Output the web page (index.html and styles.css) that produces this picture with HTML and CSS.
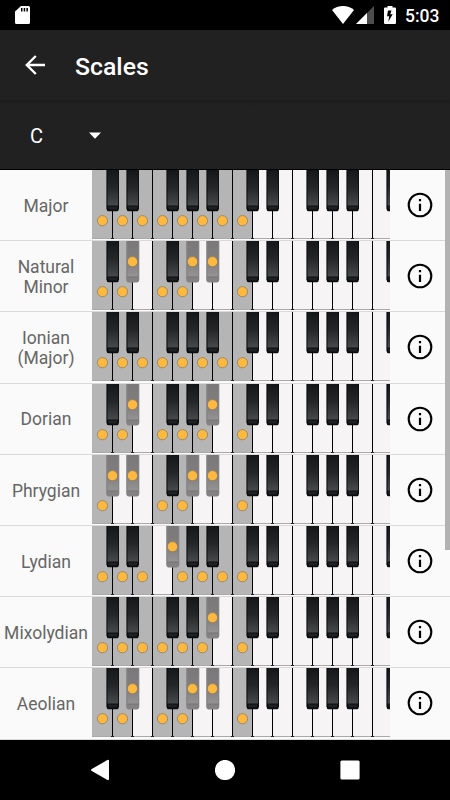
FILE: index.html
```html
<!DOCTYPE html>
<html lang="en">
<head>
<meta charset="utf-8">
<title>Scales</title>
<link rel="stylesheet" href="styles.css">
</head>
<body>
<div class="screen">
  <div class="status">
    <svg class="sd" width="16" height="18" viewBox="0 0 16 18"><path fill="#fff" fill-rule="evenodd" d="M6 0H13.500Q15 0 15 1.500V16.500Q15 18 13.500 18H1.500Q0 18 0 16.500V5.500ZM6 2V5.500H7.500V2ZM8.700 2V5.500H10.200V2ZM11.400 2V5.500H12.900V2Z"/></svg>
    <svg class="wifi" width="22" height="18" viewBox="0 0 22 18"><path fill="#fff" d="M0 4Q4.500 0 11 0T22 4L11 18Z"/></svg>
    <svg class="signal" width="18" height="18" viewBox="0 0 18 18"><path fill="#4d4d4d" d="M18 0V18H0Z"/><path fill="#fff" d="M11 7V18H0Z"/></svg>
    <svg class="battery" width="12" height="18" viewBox="0 0 12 18"><path fill="#fff" fill-rule="evenodd" d="M3.500 0H8.500V1.500H11Q12 1.500 12 2.500V17Q12 18 11 18H1Q0 18 0 17V2.500Q0 1.500 1 1.500H3.500ZM7.500 4.500H4L3 10.200H5.200L4.300 15.800 8.700 8.200H6.300Z"/></svg>
    <span class="time">5:03</span>
  </div>
  <header class="appbar">
    <svg width="20" height="20" viewBox="0 0 20 20"><path fill="none" stroke="#fff" stroke-width="2.400" d="M20 10H2M10.800 1L1.800 10 10.800 19"/></svg>
    <h1>Scales</h1>
  </header>
  <div class="picker"><span>C</span><svg width="12" height="7" viewBox="0 0 12 7"><path fill="#fff" d="M0 .5H12L6 6.700Z"/></svg></div>
  <main class="list" id="list"></main>
  <nav class="nav">
    <svg width="20" height="22" viewBox="0 0 20 22"><path fill="#fff" d="M17 1.200Q19 .2 19 2V20Q19 21.800 17 20.800L1.800 12Q.2 11 1.800 10Z"/></svg>
    <svg width="20" height="20" viewBox="0 0 20 20"><circle cx="10" cy="10" r="10.100" fill="#fff"/></svg>
    <svg width="20" height="20" viewBox="0 0 20 20"><rect x=".4" y=".4" width="19.200" height="19.200" rx="1.500" fill="#fff"/></svg>
  </nav>
  <div class="scrollbar"></div>
</div>
<svg class="defs" width="0" height="0">
  <defs>
    <linearGradient id="ebony" x1="0" y1="0" x2="0" y2="1"><stop offset="0" stop-color="#151617"/><stop offset=".5" stop-color="#242628"/><stop offset="1" stop-color="#48494b"/></linearGradient>
    <linearGradient id="muted" x1="0" y1="0" x2="0" y2="1"><stop offset="0" stop-color="#7a7878"/><stop offset=".6" stop-color="#807e7e"/><stop offset="1" stop-color="#959393"/></linearGradient>
    <g id="black"><path fill="#0b0c0d" d="M-.4 0H12.200V38.500Q12 41.200 10 41.200H2Q-.2 41.200-.4 38.500Z"/><rect x=".7" width="10.600" height="35.500" fill="url(#ebony)"/><path fill="#1f2122" d="M1 36.500H11L10 39.500H2Z"/></g>
    <g id="black-on"><path fill="#848282" d="M-.6 0H12.500V38.500Q12.300 41.500 10 41.500H2Q-.3 41.500-.6 38.500Z"/><rect x=".7" width="10.600" height="35.500" fill="url(#muted)"/><path fill="#7c7a7a" d="M.5 35.500H11.500V37H.5Z"/></g>
  </defs>
</svg>
<script src="script.js"></script>
</body>
</html>
```

FILE: styles.css
```css
* { box-sizing: border-box; }
body { margin: 0; background: #000; font-family: Roboto, sans-serif; }
.screen { position: relative; width: 450px; height: 800px; display: flex; flex-direction: column; overflow: hidden; }
.status { height: 30px; flex: none; display: flex; align-items: center; padding: 0 10px 0 15px; color: #fff; }
.status svg { flex: none; }
.wifi { margin-left: auto; margin-right: -1px; }
.signal { margin-left: 3px; }
.battery { margin-left: 10px; }
.time { width: 35px; margin-left: 9px; font-size: 17.5px; font-weight: 500; line-height: 30px; white-space: nowrap; padding-top: 1px; }
.appbar { height: 70px; flex: none; display: flex; align-items: center; gap: 30px; padding-left: 25px; background: #212121; color: #fff; }
.appbar h1 { margin: 3px 0 0; font-size: 24.8px; line-height: 30px; font-weight: 500; }
.picker { height: 69px; flex: none; display: flex; align-items: center; padding-left: 30px; background: linear-gradient(#1c1c1c, #212121 6px); color: #fff; font-size: 20px; }
.picker span { width: 59px; padding-top: 2px; }
.picker svg { margin-top: 2px; }
.list { height: 571px; flex: none; display: grid; grid-template-rows: repeat(8, 71.2px); background: #fafafa; border-top: 1px solid #000; }
.row { display: grid; grid-template-columns: 92px 298px 60px; align-items: start; border-bottom: 1px solid #dadada; }
.name { height: 70px; display: flex; align-items: center; justify-content: center; text-align: center; font-size: 17.5px; line-height: 20.500px; color: #666; padding-top: 2px; }
.keys, .info { display: block; }
.info { margin: 22px 0 0 17px; }
.nav { height: 60px; flex: none; display: flex; align-items: center; justify-content: space-between; padding: 0 90px; background: #000; }
.scrollbar { position: absolute; right: 0; top: 170px; width: 5px; height: 380px; background: #b2b2b2; }
.defs { position: absolute; }
```

FILE: script.js
```js
// Each scale lists its highlighted white keys and the black keys by gap number.
const scales = [
  ["Major", [0, 1, 2, 3, 4, 5, 6, 7], []],
  ["Natural<br>Minor", [0, 1, 3, 4, 7], [1, 4, 5]],
  ["Ionian<br>(Major)", [0, 1, 2, 3, 4, 5, 6, 7], []],
  ["Dorian", [0, 1, 3, 4, 5, 7], [1, 5]],
  ["Phrygian", [0, 3, 4, 7], [0, 1, 4, 5]],
  ["Lydian", [0, 1, 2, 4, 5, 6, 7], [3]],
  ["Mixolydian", [0, 1, 2, 3, 4, 5, 7], [5]],
  ["Aeolian", [0, 1, 3, 4, 7], [1, 4, 5]]
];
const blackKeys = [0, 1, 3, 4, 5, 7, 8, 10, 11, 12, 14];

function dot(x, y) {
  return `<circle cx="${x}" cy="${y}" r="5.100" fill="#ffb940" stroke="#84765d" stroke-width=".7"/>`;
}

function keyboard(white, black) {
  let s = '<rect width="298" height="69" fill="#f7f4f6"/>';
  for (const k of white) {
    s += `<rect x="${k * 20}" width="20" height="69" fill="#b5b5b5"/>`;
  }
  s += '<rect y="68" width="298" height="1" fill="#aaa8a9"/>';
  for (let k = 1; k < 15; k++) {
    s += `<rect x="${k * 20}" width="1" height="69" fill="#000"/><rect x="${k * 20 - 1}" y="68" width="3" height="1" fill="#222"/>`;
  }
  for (const k of blackKeys) {
    s += `<use href="#${black.includes(k) ? "black-on" : "black"}" x="${k * 20 + 14.800}"/>`;
  }
  for (const k of white) s += dot(k * 20 + 10.500, 50.700);
  for (const k of black) s += dot(k * 20 + 20.500, 20.700);
  return `<svg class="keys" width="298" height="70" viewBox="0 0 298 70">${s}</svg>`;
}

const info = '<svg class="info" width="26" height="26" viewBox="0 0 26 26"><circle cx="13" cy="13" r="11.300" fill="none" stroke="#000" stroke-width="2.100"/><path d="M11.900 7H14.100V9.200H11.900ZM11.900 11.800H14.100V19H11.900Z"/></svg>';

document.getElementById("list").innerHTML = scales.map(([name, white, black]) =>
  `<div class="row"><div class="name">${name}</div>${keyboard(white, black)}${info}</div>`).join("");
```
